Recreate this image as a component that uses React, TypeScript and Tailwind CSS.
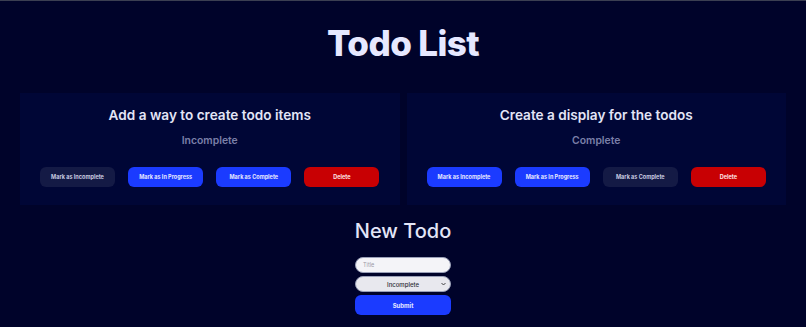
import React from "react";

const font = { fontFamily: "Inter, 'Noto Sans', sans-serif" };

function Btn({ label, kind }: { label: string; kind: "dark" | "blue" | "red" }) {
  const cls =
    kind === "dark"
      ? "bg-[#141a45] text-[#c9cbe0]"
      : kind === "blue"
      ? "bg-[#1b3bff] text-[#e6e8ff]"
      : "bg-[#c80003] text-[#ffe6e6]";
  return (
    <button className={`w-[75px] h-[20px] rounded-[6px] text-[5.5px] font-bold flex items-center justify-center ${cls}`}>
      {label}
    </button>
  );
}

function Card({ title, status, kinds }: { title: string; status: string; kinds: ("dark" | "blue" | "red")[] }) {
  return (
    <div className="flex-1 bg-[#000636] h-[112px] flex flex-col items-center px-[20px] pt-[14px]">
      <div className="text-[13.6px] font-semibold text-[#e3e5f7] leading-[16px]">{title}</div>
      <div className="mt-[10px] text-[10.4px] font-semibold text-[#7a7fa8] leading-[16px]">{status}</div>
      <div className="mt-[18px] w-full flex justify-between">
        <Btn label="Mark as Incomplete" kind={kinds[0]} />
        <Btn label="Mark as In Progress" kind={kinds[1]} />
        <Btn label="Mark as Complete" kind={kinds[2]} />
        <Btn label="Delete" kind="red" />
      </div>
    </div>
  );
}

export default function App() {
  return (
    <div style={font} className="w-[806px] h-[327px] bg-[#00032a] border-t border-[#3b3f52] overflow-hidden flex flex-col items-center">
      <h1 className="mt-[22px] text-[35px] leading-[40px] font-extrabold text-[#e6e8ff] tracking-[-0.6px]">Todo List</h1>
      <div className="mt-[30px] w-full px-[20px] flex gap-[7px]">
        <Card title="Add a way to create todo items" status="Incomplete" kinds={["dark", "blue", "blue"]} />
        <Card title="Create a display for the todos" status="Complete" kinds={["blue", "blue", "dark"]} />
      </div>
      <div className="mt-[14px] text-[20px] leading-[24px] font-medium text-[#e3e5f7]">New Todo</div>
      <div className="mt-[14px] w-[96px] flex flex-col gap-[3px]">
        <div className="h-[16px] rounded-full bg-[#f4f4f8] border border-[#9aa0b8] flex items-center px-[7px]">
          <span className="text-[5.5px] text-[#9a9aa6]">Title</span>
        </div>
        <div className="h-[16px] rounded-full bg-[#e8e8ee] border border-[#9aa0b8] flex items-center relative">
          <span className="flex-1 text-center text-[6px] font-medium text-[#2a2a35]">Incomplete</span>
          <svg className="absolute right-[4px]" width="5" height="4" viewBox="0 0 10 8">
            <path d="M1 2 L5 6 L9 2" stroke="#333" strokeWidth="1.8" fill="none" />
          </svg>
        </div>
        <button className="h-[20px] rounded-[6px] bg-[#1b3bff] text-[#e6e8ff] text-[6px] font-bold flex items-center justify-center">
          Submit
        </button>
      </div>
    </div>
  );
}
